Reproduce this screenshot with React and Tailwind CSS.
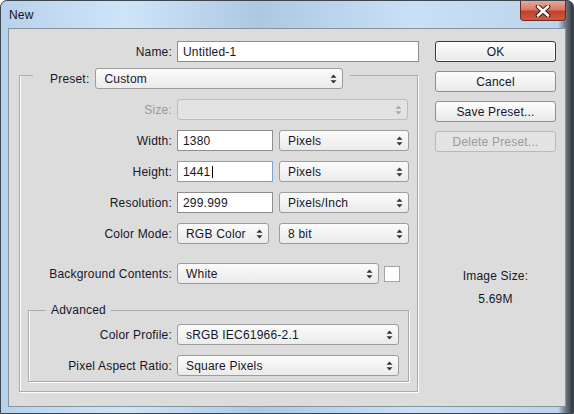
import React from "react";

// Photoshop "New" document dialog, Windows 7 Aero frame

function Arrows({ disabled }) {
  const c = disabled ? "#a9a9a9" : "#333333";
  return (
    <svg width="7" height="10" viewBox="0 0 7 10" className="shrink-0">
      <path d="M3.5 0.5 L6.5 3.8 L0.5 3.8 Z" fill={c} />
      <path d="M0.5 6.2 L6.5 6.2 L3.5 9.5 Z" fill={c} />
    </svg>
  );
}

function Select({ value, className = "", disabled }) {
  return (
    <div
      className={`flex h-[21px] items-center justify-between rounded-[3px] border pl-[8px] pr-[5px] ${
        disabled
          ? "border-[#bcbcbc] bg-[#e3e3e3]"
          : "border-[#9c9c9c] bg-[linear-gradient(#fbfbfb,#ebebeb)]"
      } ${className}`}
    >
      <span className="truncate">{value}</span>
      <Arrows disabled={disabled} />
    </div>
  );
}

function Field({ value, className = "", focused }) {
  return (
    <div
      className={`flex h-[21px] items-center border bg-white pl-[5px] ${
        focused ? "border-[#7da2ce]" : "border-[#8d8d8d]"
      } ${className}`}
    >
      <span>{value}</span>
      {focused && <span className="ml-[1px] h-[12px] w-px bg-black" />}
    </div>
  );
}

function Button({ children, primary, disabled }) {
  return (
    <div
      className={`flex h-[21px] w-[121px] items-center justify-center rounded-[3px] border ${
        disabled
          ? "border-[#b9b9b9] bg-[#e3e3e3] text-[#9b9b9b]"
          : primary
          ? "border-[#3a3a3a] bg-[linear-gradient(#fdfdfd,#e9e9e9)] shadow-[inset_0_0_0_1px_#ffffff]"
          : "border-[#8e8e8e] bg-[linear-gradient(#fdfdfd,#e9e9e9)]"
      }`}
    >
      {children}
    </div>
  );
}

function Row({ label, labelWidth = "w-[152px]", dim, children, className = "" }) {
  return (
    <div className={`flex items-center ${className}`}>
      <div className={`${labelWidth} shrink-0 text-right ${dim ? "text-[#9a9a9a]" : ""}`}>{label}</div>
      <div className="ml-[5px] flex items-center">{children}</div>
    </div>
  );
}

function CloseButton() {
  return (
    <div className="mr-[7px] flex h-[20px] w-[46px] items-center justify-center rounded-b-[4px] border border-t-0 border-[#6b2b24] bg-[linear-gradient(#e9a899_0%,#d77a68_45%,#c3402c_55%,#cf5a3e_100%)]">
      <svg width="16" height="12" viewBox="0 0 16 12">
        <path d="M3 1.5 L13 10.5 M13 1.5 L3 10.5" stroke="#3d1a16" strokeWidth="4.6" strokeLinecap="round" />
        <path d="M3 1.5 L13 10.5 M13 1.5 L3 10.5" stroke="#ffffff" strokeWidth="2.6" strokeLinecap="round" />
      </svg>
    </div>
  );
}

export default function App() {
  return (
    <div className="flex h-[414px] w-[574px] flex-col overflow-hidden rounded-t-[7px] border border-[#3b4651] bg-[linear-gradient(90deg,#b8d2eb_0%,#cfe4f7_22%,#aec8e2_45%,#c9e0f5_72%,#bcd3e9_97.4%,#727e8a_98.6%,#30363d_100%)] font-['Liberation_Sans',Arial,sans-serif] text-[12px] leading-[14px] tracking-[0.2px] text-[#161628]">
      {/* title bar */}
      <div className="flex h-[27px] shrink-0 items-start justify-between">
        <div className="pl-[8px] pt-[7px] text-[#111]">New</div>
        <CloseButton />
      </div>

      {/* client area */}
      <div className="mx-[7px] mb-[6px] flex flex-1 border border-[#8592a0] bg-[#dcdcdc]">
        {/* left column */}
        <div className="flex w-[409px] flex-col pl-[10px]">
          <Row label="Name:" labelWidth="w-[153px]" className="mt-[12px]">
            <Field value="Untitled-1" className="w-[242px]" />
          </Row>

          <fieldset className="w-[399px] border border-[#aaaaaa] pb-[9px] shadow-[inset_1px_0_0_#ffffff,1px_1px_0_#ffffff]">
            <legend className="ml-[13px] pt-[6px]">
              <div className="flex items-center pl-[17px] pr-[7px]">
                <span>Preset:</span>
                <Select value="Custom" className="ml-[6px] w-[248px]" />
              </div>
            </legend>

            <div className="mt-[10px] flex flex-col gap-[10px]">
              <Row label="Size:" dim>
                <Select value="" disabled className="w-[231px]" />
              </Row>
              <Row label="Width:">
                <Field value="1380" className="w-[96px]" />
                <Select value="Pixels" className="ml-[6px] w-[130px]" />
              </Row>
              <Row label="Height:">
                <Field value="1441" focused className="w-[96px]" />
                <Select value="Pixels" className="ml-[6px] w-[130px]" />
              </Row>
              <Row label="Resolution:">
                <Field value="299.999" className="w-[96px]" />
                <Select value="Pixels/Inch" className="ml-[6px] w-[130px]" />
              </Row>
              <Row label="Color Mode:">
                <Select value="RGB Color" className="w-[92px]" />
                <Select value="8 bit" className="ml-[10px] w-[130px]" />
              </Row>
            </div>

            <Row label="Background Contents:" className="mt-[19px]">
              <Select value="White" className="w-[202px]" />
              <div className="ml-[5px] h-[16px] w-[16px] border border-[#a3a3a3] bg-white" />
            </Row>

            <fieldset className="ml-[8px] mt-[19px] w-[381px] border border-[#aaaaaa] pb-[5px] shadow-[inset_1px_0_0_#ffffff,1px_1px_0_#ffffff]">
              <legend className="ml-[17px] h-[14px] px-[5px]">Advanced</legend>
              <div className="mt-[7px] flex flex-col gap-[10px]">
                <Row label="Color Profile:" labelWidth="w-[143px]">
                  <Select value="sRGB IEC61966-2.1" className="w-[222px]" />
                </Row>
                <Row label="Pixel Aspect Ratio:" labelWidth="w-[143px]">
                  <Select value="Square Pixels" className="w-[222px]" />
                </Row>
              </div>
            </fieldset>
          </fieldset>
        </div>

        {/* right column */}
        <div className="ml-[17px] flex w-[121px] flex-col">
          <div className="mt-[12px] flex flex-col gap-[9px]">
            <Button primary>OK</Button>
            <Button>Cancel</Button>
            <Button>Save Preset...</Button>
            <Button disabled>Delete Preset...</Button>
          </div>
          <div className="mt-[117px] text-center">Image Size:</div>
          <div className="mt-[9px] text-center">5.69M</div>
        </div>
      </div>
    </div>
  );
}
